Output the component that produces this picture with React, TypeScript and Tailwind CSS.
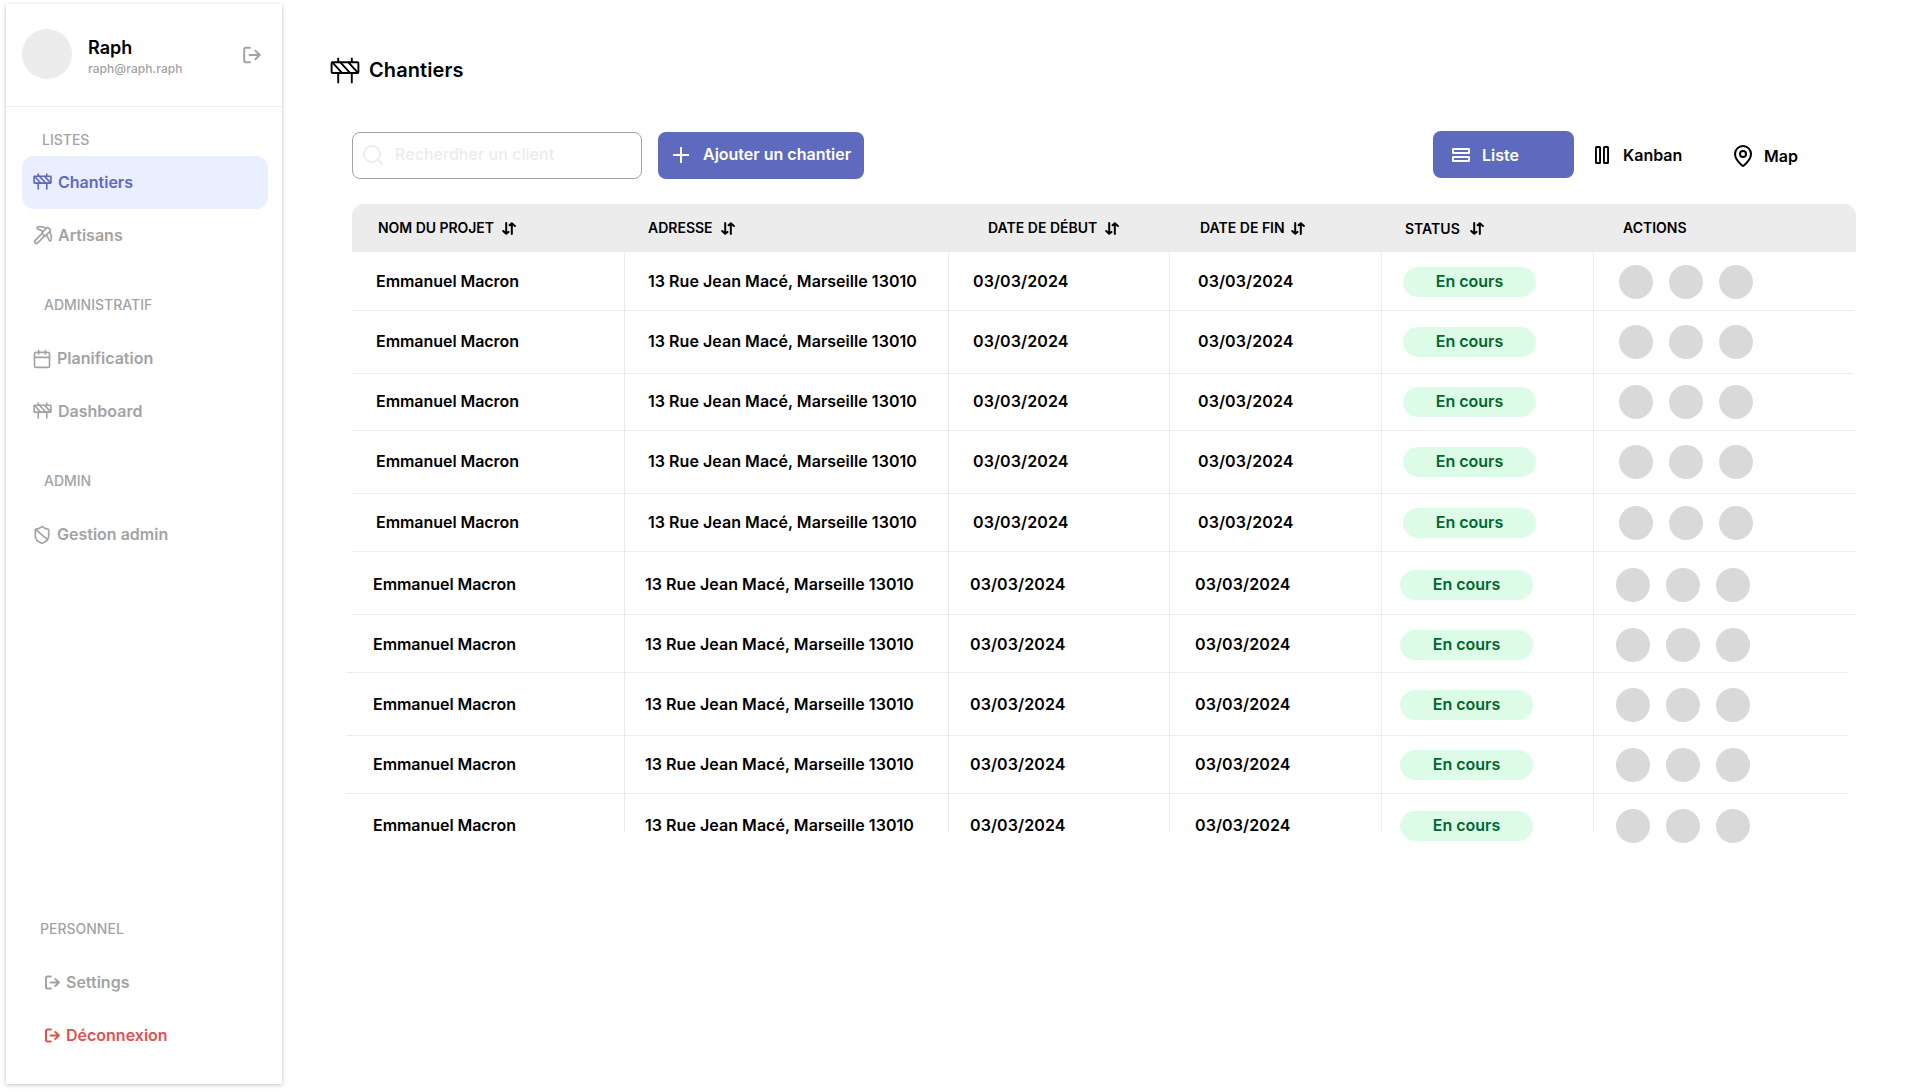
import React from 'react';
import { Calendar, MapPin, Pickaxe, Search, ShieldBan } from 'lucide-react';

type IconProps = { className?: string };

function LogoutIcon({ className, stroke = 2 }: IconProps & { stroke?: number }) {
  return (
    <svg viewBox="0 0 18 18" fill="none" stroke="currentColor" strokeWidth={stroke} strokeLinecap="round" strokeLinejoin="round" className={className}>
      <path d="M7 1.7H3Q1.2 1.7 1.2 3.5V14.5Q1.2 16.3 3 16.3H7" />
      <path d="M6.6 9H16.4M12.4 4.8L16.7 9L12.4 13.2" />
    </svg>
  );
}

function BarrierIcon({ className, stroke }: IconProps & { stroke: number }) {
  return (
    <svg viewBox="0 0 30 27" fill="none" stroke="currentColor" strokeWidth={stroke} strokeLinecap="round" strokeLinejoin="round" className={className}>
      <rect x="1.6" y="5.2" width="26.8" height="10.8" rx="1" />
      <path d="M8.2 5V1.5M21.8 5V1.5M8.2 16V25.5M21.8 16V25.5" />
      <path d="M2.6 5.6L12 15.8M10.4 5.4L20 15.8M18.4 5.4L27.8 15.6" />
    </svg>
  );
}

function SortIcon() {
  return (
    <svg viewBox="0 0 14 13" fill="none" stroke="currentColor" strokeWidth={2} strokeLinecap="round" strokeLinejoin="round" className="h-[13px] w-[14px]">
      <path d="M4.2 1V11.6M1.2 9L4.2 11.8L6.4 9.9" />
      <path d="M9.8 12V1.4M7.6 3.3L9.8 1.2L12.9 4" />
    </svg>
  );
}

function ListIcon({ className }: IconProps) {
  return (
    <svg viewBox="0 0 18 14" fill="none" stroke="currentColor" strokeWidth={1.9} strokeLinejoin="round" className={className}>
      <rect x=".95" y=".95" width="16.1" height="4.1" rx=".4" />
      <rect x=".95" y="8.95" width="16.1" height="4.1" rx=".4" />
    </svg>
  );
}

function KanbanIcon({ className }: IconProps) {
  return (
    <svg viewBox="0 0 14 18" fill="none" stroke="currentColor" strokeWidth={1.9} strokeLinejoin="round" className={className}>
      <rect x=".95" y=".95" width="4.1" height="16.1" rx=".6" />
      <rect x="8.95" y=".95" width="4.1" height="16.1" rx=".6" />
    </svg>
  );
}

function SectionLabel({ children, className }: { children: React.ReactNode; className: string }) {
  return <div className={`text-sm leading-5 font-medium ${className}`}>{children}</div>;
}

function NavItem({ icon, label, className }: { icon: React.ReactNode; label: string; className: string }) {
  return (
    <a className={`flex h-[53px] items-center rounded-xl pb-0.5 font-semibold ${className}`}>
      {icon}
      <span>{label}</span>
    </a>
  );
}

const rows = [
  { size: 'h-[59px] pt-[15px]', shifted: false, offset: 'flush' },
  { size: 'h-[63px] pt-[16px]', shifted: false, offset: 'flush' },
  { size: 'h-[57px] pt-[13px]', shifted: false, offset: 'inset' },
  { size: 'h-[63px] pt-[16px]', shifted: false, offset: 'inset' },
  { size: 'h-[58px] pt-[14px]', shifted: false, offset: 'inset' },
  { size: 'h-[63px] pt-[18px]', shifted: true, offset: 'inset' },
  { size: 'h-[58px] pt-[15px]', shifted: true, offset: 'outset' },
  { size: 'h-[63px] pt-[17px]', shifted: true, offset: 'outset' },
  { size: 'h-[58px] pt-[14px]', shifted: true, offset: 'outset' },
  { size: 'h-[39px] pt-[17px]', shifted: true, offset: 'outset' },
];

const grids: Record<string, string> = {
  flush: 'w-[1502px] grid-cols-[273px_324px_221px_212px_212px_1fr]',
  inset: 'ml-px w-[1502px] grid-cols-[272px_324px_221px_212px_212px_1fr]',
  outset: '-ml-1.5 w-[1502px] grid-cols-[279px_324px_221px_212px_212px_1fr]',
};

const namePadding: Record<string, string> = {
  flush: 'pl-6',
  inset: 'pl-[23px]',
  outset: 'pl-[27px]',
};

const headers = [
  { label: 'NOM DU PROJET', className: 'w-[270px] gap-2 tracking-[-0.05px]', labelClass: '' },
  { label: 'ADRESSE', className: 'w-[340px] gap-2', labelClass: '' },
  { label: 'DATE DE DÉBUT', className: 'w-[212px] gap-2', labelClass: '' },
  { label: 'DATE DE FIN', className: 'w-[205px] gap-[6px]', labelClass: '' },
  { label: 'STATUS', className: 'w-[218px] gap-[10px]', labelClass: 'pt-0.5' },
];

function Row({ size, shifted, offset, last }: { size: string; shifted: boolean; offset: string; last: boolean }) {
  const line = last ? 'border-b-transparent' : 'border-b-[#ececec]';
  const cell = `flex border-b ${line} ${size}`;
  const ruled = `${cell} border-r border-r-[#ececec]`;
  return (
    <div className={`grid leading-[29px] font-semibold whitespace-nowrap ${grids[offset]}`}>
      <div className={`${ruled} tracking-[-0.05px] ${shifted && offset === 'inset' ? 'pl-5' : namePadding[offset]}`}>Emmanuel Macron</div>
      <div className={`${ruled} tracking-[0.04px] ${shifted ? 'pl-5' : 'pl-[23px]'}`}>13 Rue Jean Macé, Marseille 13010</div>
      <div className={`${ruled} tracking-[0.1px] ${shifted ? 'pl-[21px]' : 'pl-6'}`}>03/03/2024</div>
      <div className={`${ruled} tracking-[0.1px] ${shifted ? 'pl-[25px]' : 'pl-7'}`}>03/03/2024</div>
      <div className={`${ruled} ${shifted ? 'pl-[18px]' : 'pl-[21px]'}`}>
        <span className="h-[30px] w-[133px] shrink-0 rounded-full bg-[#dcfce7] text-center text-[#016630]">En cours</span>
      </div>
      <div className={`${cell} ${shifted ? 'pl-[22px]' : 'pl-[25px]'}`}>
        <div className="-mt-0.5 flex gap-4">
          <span className="size-[34px] rounded-full bg-[#d9d9d9]" />
          <span className="size-[34px] rounded-full bg-[#d9d9d9]" />
          <span className="size-[34px] rounded-full bg-[#d9d9d9]" />
        </div>
      </div>
    </div>
  );
}

export default function App() {
  return (
    <div className="flex h-[1092px] w-[1926px] overflow-hidden bg-white font-['Inter',sans-serif] text-base text-black">
      <aside className="mt-1 ml-1.5 flex h-[1080px] w-[276px] shrink-0 flex-col bg-white text-[#a3a3a3] shadow-[0_1px_4px_rgba(0,0,0,0.25)]">
        <div className="flex h-[103px] shrink-0 items-start border-b border-[#ececec] pt-[25px] pl-4">
          <div className="size-[50px] shrink-0 rounded-full bg-[#ececec]" />
          <div className="w-[171px] shrink-0 pt-1.5 pl-4">
            <div className="text-lg leading-[26px] font-semibold text-black">Raph</div>
            <div className="text-xs leading-4 font-medium tracking-[0.08px]">raph@raph.raph</div>
          </div>
          <LogoutIcon className="mt-[17px] size-[18px] shrink-0" />
        </div>

        <nav className="flex flex-col pt-[23px] pr-3.5 pl-4">
          <SectionLabel className="pl-5">LISTES</SectionLabel>
          <NavItem label="Chantiers" className="mt-[6px] gap-[6px] bg-[#e9efff] pl-[11px] text-[#5e6abd]" icon={<BarrierIcon stroke={2.6} className="h-[17px] w-[19px]" />} />
          <NavItem label="Artisans" className="gap-[5px] pl-[11px]" icon={<Pickaxe size={20} />} />
          <SectionLabel className="mt-[33px] pl-[22px]">ADMINISTRATIF</SectionLabel>
          <NavItem label="Planification" className="mt-[17px] gap-[5px] pl-[10px]" icon={<Calendar size={20} className="mt-0.5" />} />
          <NavItem label="Dashboard" className="gap-[6px] pl-[11px]" icon={<BarrierIcon stroke={2.6} className="h-[17px] w-[19px]" />} />
          <SectionLabel className="mt-[33px] pl-[22px]">ADMIN</SectionLabel>
          <NavItem label="Gestion admin" className="mt-[17px] gap-[5px] pl-[10px]" icon={<ShieldBan size={20} className="mt-0.5" />} />
        </nav>

        <nav className="mt-auto flex flex-col px-4 pb-[22px]">
          <SectionLabel className="pl-[18px]">PERSONNEL</SectionLabel>
          <NavItem label="Settings" className="mt-[17px] gap-[6px] pl-[23px]" icon={<LogoutIcon stroke={2.4} className="mt-0.5 size-[15px]" />} />
          <NavItem label="Déconnexion" className="gap-[6px] pl-[23px] text-[#dd5353]" icon={<LogoutIcon stroke={2.4} className="mt-0.5 size-[15px]" />} />
        </nav>
      </aside>

      <main className="flex flex-col pl-[48px]">
        <h1 className="mt-[56px] flex h-7 items-center gap-[9px] text-xl font-semibold tracking-[0.08px]">
          <BarrierIcon stroke={1.9} className="h-[27px] w-[30px]" />
          Chantiers
        </h1>

        <div className="mt-[47px] ml-[22px] flex h-[49px] w-[1504px] items-start">
          <div className="mt-px flex h-[47px] w-[290px] items-center gap-[10px] rounded-lg border border-[#a3a3a3] pb-0.5 pl-2 font-medium text-[#ececec]">
            <Search size={24} strokeWidth={1.8} />
            <span className="-mt-px tracking-[0.04px]">Recherdher un client</span>
          </div>
          <button className="mt-px ml-4 flex h-[47px] w-[206px] items-center gap-[14px] rounded-lg bg-[#5e6abd] pb-0.5 pl-[15px] font-semibold whitespace-nowrap text-white">
            <svg viewBox="0 0 16 16" stroke="currentColor" strokeWidth={2} className="size-4 shrink-0">
              <path d="M8 0V16M0 8H16" />
            </svg>
            <span className="-mt-px">Ajouter un chantier</span>
          </button>
          <button className="ml-[569px] flex h-[47px] w-[141px] items-center gap-3 rounded-lg bg-[#5e6abd] pl-[19px] font-semibold text-white">
            <ListIcon className="h-[14px] w-[18px]" />
            Liste
          </button>
          <button className="ml-[21px] flex h-[47px] w-[136px] items-center gap-[14px] font-semibold">
            <KanbanIcon className="h-[18px] w-[14px]" />
            Kanban
          </button>
          <button className="mt-px flex h-[48px] items-center gap-[9px] font-semibold">
            <MapPin size={24} />
            Map
          </button>
        </div>

        <section className="mt-[24px] ml-[22px] w-[1504px]">
          <div className="flex h-[48px] items-center rounded-t-xl bg-[#ececec] pl-[26px] text-sm font-semibold">
            {headers.map((header) => (
              <div key={header.label} className={`flex shrink-0 items-center ${header.className}`}>
                <span className={header.labelClass}>{header.label}</span>
                <SortIcon />
              </div>
            ))}
            <div>ACTIONS</div>
          </div>
          {rows.map((row, index) => (
            <Row key={index} {...row} last={index === rows.length - 1} />
          ))}
        </section>
      </main>
    </div>
  );
}
